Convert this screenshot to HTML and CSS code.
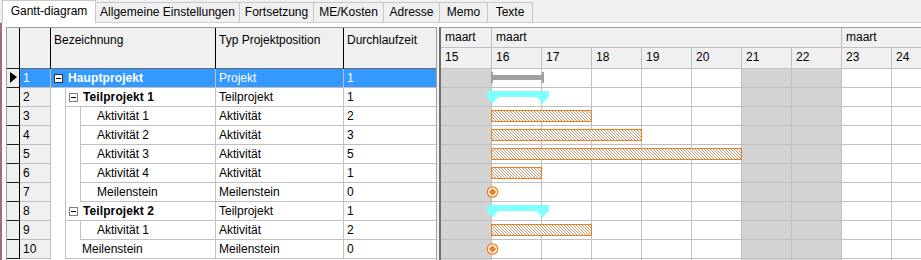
FILE: index.html
```html
<!doctype html>
<html>
  <head>
    <meta charset='utf-8'>
    <title>Gantt-diagram</title>
    <link rel="stylesheet" href="styles.css">
  </head>
  <body>

    <div class='tabs'>
      <div class='tab active'>Gantt-diagram</div>
      <div class='tab'>Allgemeine Einstellungen</div>
      <div class='tab'>Fortsetzung</div>
      <div class='tab'>ME/Kosten</div>
      <div class='tab'>Adresse</div>
      <div class='tab'>Memo</div>
      <div class='tab'>Texte</div>
    </div>

    <div class='page'>

      <div class='grid'>
        <div class='row head'>
          <div class='ind'></div>
          <div class='num'></div>
          <div class='name'>Bezeichnung</div>
          <div class='type'>Typ Projektposition</div>
          <div class='dur'>Durchlaufzeit</div>
        </div>

        <div class='row sel'>
          <div class='ind'><span class='arrow'></span></div>
          <div class='num'>1</div>
          <div class='name tree'><div class='cell'><span class='tog'></span><b>Hauptprojekt</b></div></div>
          <div class='type'>Projekt</div>
          <div class='dur'>1</div>
        </div>
        <div class='row l1'>
          <div class='ind'></div>
          <div class='num'>2</div>
          <div class='name tree'><div class='indent'></div><div class='cell'><span class='tog'></span><b>Teilprojekt 1</b></div></div>
          <div class='type'>Teilprojekt</div>
          <div class='dur'>1</div>
        </div>
        <div class='row l2'>
          <div class='ind'></div>
          <div class='num'>3</div>
          <div class='name tree'><div class='indent'></div><div class='cell leaf'>Aktivität 1</div></div>
          <div class='type'>Aktivität</div>
          <div class='dur'>2</div>
        </div>
        <div class='row l2'>
          <div class='ind'></div>
          <div class='num'>4</div>
          <div class='name tree'><div class='indent'></div><div class='cell leaf'>Aktivität 2</div></div>
          <div class='type'>Aktivität</div>
          <div class='dur'>3</div>
        </div>
        <div class='row l2'>
          <div class='ind'></div>
          <div class='num'>5</div>
          <div class='name tree'><div class='indent'></div><div class='cell leaf'>Aktivität 3</div></div>
          <div class='type'>Aktivität</div>
          <div class='dur'>5</div>
        </div>
        <div class='row l2'>
          <div class='ind'></div>
          <div class='num'>6</div>
          <div class='name tree'><div class='indent'></div><div class='cell leaf'>Aktivität 4</div></div>
          <div class='type'>Aktivität</div>
          <div class='dur'>1</div>
        </div>
        <div class='row l2'>
          <div class='ind'></div>
          <div class='num'>7</div>
          <div class='name tree'><div class='indent'></div><div class='cell leaf'>Meilenstein</div></div>
          <div class='type'>Meilenstein</div>
          <div class='dur'>0</div>
        </div>
        <div class='row l1'>
          <div class='ind'></div>
          <div class='num'>8</div>
          <div class='name tree'><div class='indent'></div><div class='cell'><span class='tog'></span><b>Teilprojekt 2</b></div></div>
          <div class='type'>Teilprojekt</div>
          <div class='dur'>1</div>
        </div>
        <div class='row l2'>
          <div class='ind'></div>
          <div class='num'>9</div>
          <div class='name tree'><div class='indent'></div><div class='cell leaf'>Aktivität 1</div></div>
          <div class='type'>Aktivität</div>
          <div class='dur'>2</div>
        </div>
        <div class='row l1'>
          <div class='ind'></div>
          <div class='num'>10</div>
          <div class='name tree'><div class='indent'></div><div class='cell leaf'>Meilenstein</div></div>
          <div class='type'>Meilenstein</div>
          <div class='dur'>0</div>
        </div>
      </div>

      <div class='splitter'></div>

      <div class='gantt'>
        <div class='scale months'>
          <div class='m1'>maart</div>
          <div class='m2'>maart</div>
          <div class='m3'>maart</div>
        </div>
        <div class='scale days'>
          <div>15</div><div>16</div><div>17</div><div>18</div><div>19</div>
          <div>20</div><div>21</div><div>22</div><div>23</div><div>24</div>
        </div>

        <svg class='chart' width='480' height='191' viewBox='0 0 480 191'>
          <defs>
            <pattern id='hatch' width='3' height='3' patternUnits='userSpaceOnUse'>
              <rect width='3' height='3' fill='#fff'/>
              <path d='M-1,-1 L4,4 M-1,2 L1,4 M2,-1 L4,1' stroke='#b88e6c' stroke-width='0.9'/>
            </pattern>
          </defs>

          <!-- weekends -->
          <rect x='0' y='0' width='50' height='191' fill='#d3d3d3'/>
          <rect x='300' y='0' width='100' height='191' fill='#d3d3d3'/>

          <!-- grid -->
          <g stroke='#c0c0c0' shape-rendering='crispEdges'>
            <path d='M50.5,0V191 M100.5,0V191 M150.5,0V191 M200.5,0V191 M250.5,0V191 M300.5,0V191 M350.5,0V191 M400.5,0V191 M450.5,0V191'/>
            <path d='M0,18.5H480 M0,37.5H480 M0,56.5H480 M0,75.5H480 M0,94.5H480 M0,113.5H480 M0,132.5H480 M0,151.5H480 M0,170.5H480 M0,189.5H480'/>
          </g>

          <!-- Hauptprojekt -->
          <g fill='#a0a0a0' shape-rendering='crispEdges'>
            <rect x='50' y='6' width='53' height='5'/>
            <rect x='50' y='3' width='2' height='11'/>
            <rect x='101' y='3' width='2' height='11'/>
          </g>

          <!-- Teilprojekte -->
          <g fill='#80ffff'>
            <rect x='46' y='22' width='62' height='6'/>
            <polygon points='45.5,28 57.5,28 51.5,34.5'/>
            <polygon points='95.5,28 107.5,28 101.5,34.5'/>
            <rect x='46' y='136' width='62' height='6'/>
            <polygon points='45.5,142 57.5,142 51.5,148.5'/>
            <polygon points='95.5,142 107.5,142 101.5,148.5'/>
          </g>

          <!-- Aktivitäten -->
          <g fill='url(#hatch)' stroke='#f07d1e' stroke-width='1' shape-rendering='crispEdges'>
            <rect x='50.5' y='41.5' width='100' height='11'/>
            <rect x='50.5' y='60.5' width='150' height='11'/>
            <rect x='50.5' y='79.5' width='250' height='11'/>
            <rect x='50.5' y='98.5' width='50' height='11'/>
            <rect x='50.5' y='155.5' width='100' height='11'/>
          </g>

          <!-- Meilensteine -->
          <g>
            <circle cx='51.5' cy='123' r='5.2' fill='#fff' stroke='#f07d1e' stroke-width='1.3'/>
            <polygon points='51.5,119.3 55.2,123 51.5,126.7 47.8,123' fill='#f07d1e'/>
            <circle cx='51.5' cy='180' r='5.2' fill='#fff' stroke='#f07d1e' stroke-width='1.3'/>
            <polygon points='51.5,176.3 55.2,180 51.5,183.7 47.8,180' fill='#f07d1e'/>
          </g>
        </svg>
      </div>

    </div>

  </body>
</html>
```

FILE: styles.css
```css
* {
  box-sizing: border-box;
}

body {
  margin: 0;
  width: 921px;
  height: 260px;
  overflow: hidden;
  background: #f0f0f0;
  font-family: 'Liberation Sans', Arial, sans-serif;
  font-size: 12px;
  color: #000;
}

/* tab strip */

.tabs {
  display: flex;
  align-items: flex-end;
  height: 23px;
  padding-left: 2px;
  box-shadow: inset 0 -1px #d0d0d0;
}

.tab {
  height: 20px;
  margin-bottom: 1px;
  line-height: 19px;
  text-align: center;
  border: 1px solid #c8c8c8;
  border-left: none;
  border-bottom: none;
  background: #f0f0f0;
  white-space: nowrap;
}

.tab:nth-child(2) { width: 144px; }
.tab:nth-child(3) { width: 74px; }
.tab:nth-child(4) { width: 70px; }
.tab:nth-child(5) { width: 56px; }
.tab:nth-child(6) { width: 48px; }
.tab:nth-child(7) { width: 45px; }

.tab.active {
  width: 94px;
  height: 23px;
  margin-bottom: 0;
  line-height: 21px;
  border-left: 1px solid #c8c8c8;
  background: #fff;
}

/* tab page */

.page {
  display: flex;
  height: 237px;
  padding: 4px 0 0 4px;
  border-left: 2px solid #a86a7c;
  background: #fff;
}

/* tree grid */

.grid {
  flex: none;
  width: 430px;
  border-top: 1px solid #a0a0a0;
  border-left: 1px solid #a0a0a0;
}

.row {
  display: flex;
  height: 19px;
}

.row > div {
  flex: none;
  padding-left: 3px;
  line-height: 18px;
  white-space: nowrap;
  overflow: hidden;
  border-bottom: 1px solid #c0c0c0;
}

.ind {
  width: 13px;
  background: #f0f0f0;
  border-right: 1px solid #000;
  border-bottom-color: #202020 !important;
}

.num {
  width: 31px;
  background: #f0f0f0;
  border-right: 1px solid #c0c0c0;
}

.name {
  width: 165px;
  border-right: 1px solid #c0c0c0;
}

.type {
  width: 128px;
  border-right: 1px solid #c0c0c0;
}

.dur {
  width: 92px;
}

.head {
  height: 41px;
}

.head > div {
  padding-top: 5px;
  line-height: 14px;
  background: #f0f0f0;
  border-right: 1px solid #000;
  border-bottom: 1px solid #696969;
}

.head > .dur {
  border-right: none;
}

.row > .tree {
  display: flex;
  padding-left: 0;
  border-bottom: none;
}

.indent {
  flex: none;
}

.l1 .indent {
  width: 14px;
}

.l2 .indent {
  width: 29px;
  background: linear-gradient(to right, transparent 14px, #c0c0c0 14px, #c0c0c0 15px, transparent 15px);
}

.cell {
  flex: 1;
  display: flex;
  align-items: center;
  padding-left: 3px;
  border-bottom: 1px solid #c0c0c0;
}

.l1 .cell,
.l2 .cell {
  border-left: 1px solid #c0c0c0;
}

.cell.leaf {
  padding-left: 16px;
}

.cell b {
  letter-spacing: 0.1px;
}

.tog {
  position: relative;
  flex: none;
  width: 9px;
  height: 9px;
  margin-right: 5px;
  border: 1px solid #808080;
  background: #fff;
}

.tog::after {
  content: '';
  position: absolute;
  left: 1px;
  top: 3px;
  width: 5px;
  height: 1px;
  background: #000;
}

.sel > div:not(.ind) {
  background: #3399ff;
  color: #fff;
}

.sel .tog {
  border-color: #303030;
}

.arrow {
  display: block;
  width: 0;
  height: 0;
  margin-top: 3px;
  border-left: 7px solid #000;
  border-top: 5px solid transparent;
  border-bottom: 6px solid transparent;
}

/* splitter */

.splitter {
  flex: none;
  width: 5px;
  background: #f0f0f0;
  border-left: 1px solid #a0a0a0;
  border-right: 2px solid #707070;
}

/* gantt */

.gantt {
  flex: 1;
  overflow: hidden;
  border-top: 1px solid #a0a0a0;
}

.scale {
  display: flex;
  height: 20px;
  background: #f0f0f0;
  border-bottom: 1px solid #c0c0c0;
}

.scale > div {
  flex: none;
  padding-left: 4px;
  line-height: 19px;
  border-left: 1px solid #c0c0c0;
}

.scale > div:first-child {
  border-left: none;
}

.days {
  height: 21px;
}

.days > div,
.m1 {
  width: 50px;
}

.m2 {
  width: 350px;
}

.m3 {
  width: 100px;
}

.chart {
  display: block;
}
```
